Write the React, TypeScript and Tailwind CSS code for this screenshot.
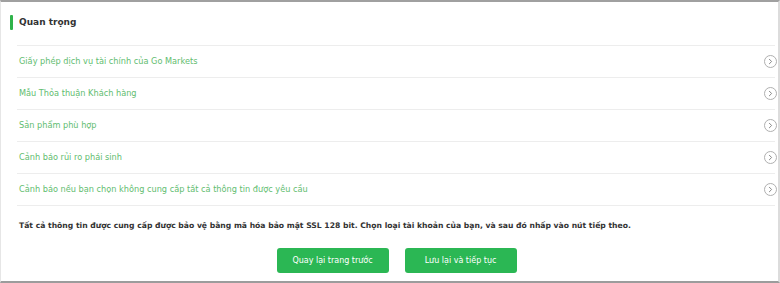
import { ChevronRight } from 'lucide-react';

const items = [
  'Giấy phép dịch vụ tài chính của Go Markets',
  'Mẫu Thỏa thuận Khách hàng',
  'Sản phẩm phù hợp',
  'Cảnh báo rủi ro phái sinh',
  'Cảnh báo nếu bạn chọn không cung cấp tất cả thông tin được yêu cầu',
];

export default function App() {
  return (
    <div className="w-[780px] h-[283px] bg-white border-t-2 border-b-2 border-t-[#a0a0a0] border-b-[#9c9c9c] border-l border-r-2 border-l-[#e6e6e6] border-r-[#dcdcdc] font-['DejaVu_Sans',sans-serif] overflow-hidden">
      <div className="flex items-center h-[15px] mt-[13px] ml-[9px]">
        <div className="w-[3px] h-[15px] bg-[#2fb34a] rounded-[1px]" />
        <span className="ml-[6px] text-[9px] font-bold text-[#333333]">Quan trọng</span>
      </div>

      <div className="mt-[15px] ml-[16px] mr-[3px] border-t border-[#ededed]">
        {items.map((item) => (
          <div key={item} className="flex items-center justify-between h-[32px] border-b border-[#ededed] pl-[2px]">
            <span className="text-[8.2px] text-[#62bd70]">{item}</span>
            <span className="flex items-center justify-center w-[13px] h-[13px] rounded-full border border-[#b0b0b0] mr-[-2px]">
              <ChevronRight className="w-[9px] h-[9px] text-[#808080]" strokeWidth={2.5} />
            </span>
          </div>
        ))}
      </div>

      <p className="mt-[14px] ml-[18px] text-[7.65px] font-bold text-[#333333]">
        Tất cả thông tin được cung cấp được bảo vệ bằng mã hóa bảo mật SSL 128 bit. Chọn loại tài khoản của bạn, và sau đó nhấp vào nút tiếp theo.
      </p>

      <div className="flex justify-center gap-[16px] mt-[17px] ml-[14px]">
        <button className="w-[112px] h-[25px] rounded-[3px] bg-[#2bb754] text-white text-[8px]">Quay lại trang trước</button>
        <button className="w-[112px] h-[25px] rounded-[3px] bg-[#2bb754] text-white text-[8px]">Lưu lại và tiếp tục</button>
      </div>
    </div>
  );
}
